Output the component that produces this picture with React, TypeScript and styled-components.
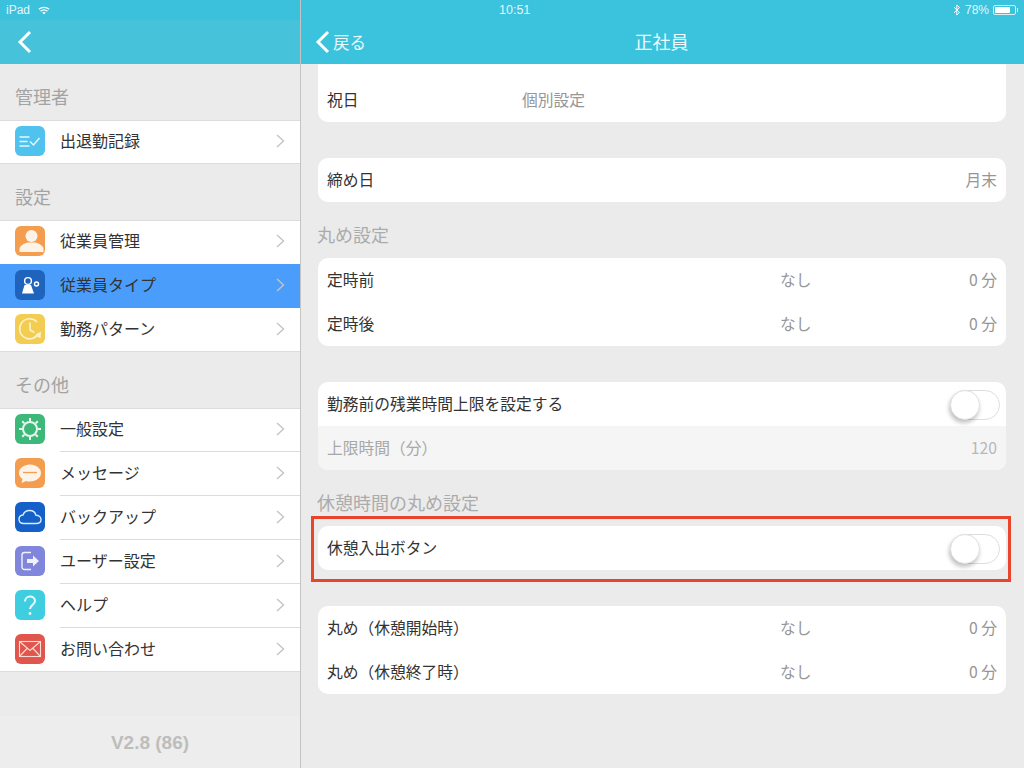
import React from 'react'
import styled, { createGlobalStyle } from 'styled-components'

const GlobalStyle = createGlobalStyle`
  html, body {
    margin: 0;
    padding: 0;
    background: #ebebeb;
  }
  body {
    font-family: "Noto Sans CJK JP", "Noto Sans", sans-serif;
  }
  * {
    box-sizing: border-box;
  }
`

const Tile = ({ color, children }: { color: string; children: React.ReactNode }) => (
  <IconTile $color={color}>
    <svg width="30" height="30" viewBox="0 0 30 30" fill="none">
      {children}
    </svg>
  </IconTile>
)

const menu = [
  {
    title: '管理者',
    items: [
      {
        label: '出退勤記録',
        icon: (
          <Tile color="#4fc3ee">
            <path d="M4.500 11h10M4.500 15.500h8M4.500 20h10" stroke="#e6f7fd" strokeWidth="1.500" />
            <path d="M15 15.500l3.500 3.500 6-7" stroke="#e6f7fd" strokeWidth="1.500" />
          </Tile>
        ),
      },
    ],
  },
  {
    title: '設定',
    items: [
      {
        label: '従業員管理',
        icon: (
          <Tile color="#f59d4f">
            <circle cx="16.500" cy="10" r="6" fill="#fdf3e8" />
            <path d="M4.500 26v-2.500c0-4 4.500-6 8-7h8c3.500 1 8 3 8 7V26z" fill="#fdf3e8" />
          </Tile>
        ),
      },
      {
        label: '従業員タイプ',
        active: true,
        icon: (
          <Tile color="#1f63bd">
            <circle cx="13" cy="11" r="3.400" stroke="#fff" strokeWidth="1.400" />
            <path d="M7 23.500l2.500-8.500h6.500l3 8.500z" fill="#fff" />
            <circle cx="21.500" cy="14" r="2" stroke="#fff" strokeWidth="1.500" />
          </Tile>
        ),
      },
      {
        label: '勤務パターン',
        icon: (
          <Tile color="#f2cd52">
            <path d="M23.500 19.500A10 10 0 1 1 22 8" stroke="#fbf2c8" strokeWidth="1.600" />
            <path d="M15 8.500V16l4.500 2.500" stroke="#fbf2c8" strokeWidth="1.600" />
            <path d="M26 17.500l-.5 7-5.500-3.500z" fill="#fbf2c8" />
          </Tile>
        ),
      },
    ],
  },
  {
    title: 'その他',
    items: [
      {
        label: '一般設定',
        icon: (
          <Tile color="#3cb878">
            <circle cx="15" cy="15" r="7" stroke="#e8f8ef" strokeWidth="2" />
            <path
              d="M15 4v3M15 23v3M4 15h3M23 15h3M7.200 7.200l2.100 2.100M20.700 20.700l2.100 2.100M7.200 22.800l2.100-2.100M20.700 9.300l2.100-2.100"
              stroke="#e8f8ef"
              strokeWidth="2"
            />
          </Tile>
        ),
      },
      {
        label: 'メッセージ',
        icon: (
          <Tile color="#f59d4f">
            <path d="M15 6.500c6 0 11 3.600 11 8.500s-5 8.500-11 8.500c-1.400 0-2.800-.2-4-.6L6.500 25l1-4C5.300 19.500 4 17.400 4 15c0-4.900 5-8.500 11-8.500z" fill="#fdf3e8" />
            <path d="M8 14.500h14" stroke="#f59d4f" strokeWidth="1.300" />
          </Tile>
        ),
      },
      {
        label: 'バックアップ',
        icon: (
          <Tile color="#1560c8">
            <path
              d="M9 21.500c-3 0-5-1.800-5-4.300 0-2.300 1.800-4 4-4.200C9 10.200 11.500 8.500 14.500 8.500c3.300 0 5.800 2 6.500 4.800 2.800 0 5 1.800 5 4.200 0 2.400-2 4-4.800 4z"
              stroke="#dcebfb"
              strokeWidth="1.400"
            />
          </Tile>
        ),
      },
      {
        label: 'ユーザー設定',
        icon: (
          <Tile color="#7f86dc">
            <path d="M16 6.500H9.500A2.500 2.500 0 0 0 7 9v12a2.500 2.500 0 0 0 2.500 2.500H16" stroke="#f0f1fc" strokeWidth="1.400" />
            <path d="M12 13h6V9.500l6 5.500-6 5.500V17h-6z" fill="#f0f1fc" />
          </Tile>
        ),
      },
      {
        label: 'ヘルプ',
        icon: (
          <Tile color="#3fcde0">
            <path d="M10 11.500c0-3 2.200-5 5-5s5 1.800 5 4.500c0 4-5 3.800-5 8" stroke="#eafafc" strokeWidth="2" />
            <circle cx="15" cy="23.500" r="1.400" fill="#eafafc" />
          </Tile>
        ),
      },
      {
        label: 'お問い合わせ',
        icon: (
          <Tile color="#e0564c">
            <rect x="4.500" y="7.500" width="21" height="15" stroke="#fbdcd6" strokeWidth="1.100" />
            <path d="M4.500 7.500L15 16.500l10.500-9M4.500 22.500l7.500-8M25.500 22.500l-7.500-8" stroke="#fbdcd6" strokeWidth="1.100" />
          </Tile>
        ),
      },
    ],
  },
]

const Chevron = () => (
  <svg width="9" height="14" viewBox="0 0 9 14" fill="none">
    <path d="M1 1l6.500 6L1 13" stroke="#c4c4c4" strokeWidth="1.400" />
  </svg>
)

const BackArrow = () => (
  <svg width="15" height="24" viewBox="0 0 15 24" fill="none">
    <path d="M13 2L3 12l10 10" stroke="#fff" strokeWidth="3" />
  </svg>
)

const Switch = () => (
  <SwitchTrack>
    <SwitchKnob />
  </SwitchTrack>
)

export default function App() {
  return (
    <Page>
      <GlobalStyle />
      <Sidebar>
        <StatusBarLeft>
          <StatusText>iPad</StatusText>
          <svg width="12" height="9" viewBox="0 0 14 10" fill="none">
            <path d="M1 3.500C4.500.5 9.500.5 13 3.500M3 5.800c2.500-2 5.500-2 8 0" stroke="#fff" strokeWidth="1.500" />
            <path d="M5 7.500c1.300-1 2.700-1 4 0L7 9.500z" fill="#fff" />
          </svg>
        </StatusBarLeft>
        <SideNav>
          <BackArrow />
        </SideNav>
        {menu.map((section) => (
          <section key={section.title}>
            <SideHeading>{section.title}</SideHeading>
            <MenuList>
              {section.items.map((item) => (
                <MenuRow key={item.label} $active={'active' in item && item.active}>
                  {item.icon}
                  <MenuLabel>{item.label}</MenuLabel>
                  <Chevron />
                </MenuRow>
              ))}
            </MenuList>
          </section>
        ))}
        <SideSpacer />
        <Version>V2.8 (86)</Version>
      </Sidebar>

      <Main>
        <MainBar>
          <span />
          <Clock>10:51</Clock>
          <StatusRight>
            <svg width="8" height="12" viewBox="0 0 8 12" fill="none">
              <path d="M1 3.200l5.500 5.300L3.800 11V1l2.700 2.500L1 8.800" stroke="#fff" strokeWidth="1" />
            </svg>
            <StatusText>78%</StatusText>
            <Battery>
              <BatteryLevel />
            </Battery>
          </StatusRight>
        </MainBar>
        <TitleBar>
          <BackLink>
            <BackArrow />
            <span>戻る</span>
          </BackLink>
          <PageTitle>正社員</PageTitle>
        </TitleBar>
        <Content>
          <Card $clipped>
            <Row $mid={195}>
              <Label>祝日</Label>
              <Value>個別設定</Value>
            </Row>
          </Card>

          <Card $gap={36}>
            <Row>
              <Label>締め日</Label>
              <span />
              <Value>月末</Value>
            </Row>
          </Card>

          <GroupTitle>丸め設定</GroupTitle>
          <Card>
            <Row>
              <Label>定時前</Label>
              <Value>なし</Value>
              <Value>0 分</Value>
            </Row>
            <Row>
              <Label>定時後</Label>
              <Value>なし</Value>
              <Value>0 分</Value>
            </Row>
          </Card>

          <Card $gap={36}>
            <Row>
              <Label>勤務前の残業時間上限を設定する</Label>
              <span />
              <Switch />
            </Row>
            <Row $disabled>
              <Label $muted>上限時間（分）</Label>
              <span />
              <Value $muted>120</Value>
            </Row>
          </Card>

          <GroupTitle>休憩時間の丸め設定</GroupTitle>
          <Card $highlight>
            <Row>
              <Label>休憩入出ボタン</Label>
              <span />
              <Switch />
            </Row>
          </Card>

          <Card $gap={36}>
            <Row>
              <Label>丸め（休憩開始時）</Label>
              <Value>なし</Value>
              <Value>0 分</Value>
            </Row>
            <Row>
              <Label>丸め（休憩終了時）</Label>
              <Value>なし</Value>
              <Value>0 分</Value>
            </Row>
          </Card>
        </Content>
      </Main>
    </Page>
  )
}

const Page = styled.div`
  display: flex;
  width: 1024px;
  height: 768px;
  overflow: hidden;
  background: #ebebeb;
`
const Sidebar = styled.aside`
  display: flex;
  flex-direction: column;
  width: 301px;
  flex-shrink: 0;
  border-right: 1px solid #c4c4c4;
  background: #ebebeb;
`
const StatusBarLeft = styled.div`
  display: flex;
  align-items: center;
  gap: 8px;
  height: 20px;
  padding-left: 6px;
  background: #3bc1db;
`
const StatusText = styled.span`
  font-size: 12px;
  color: #e4f6fa;
  font-family: "Liberation Sans", sans-serif;
`
const SideNav = styled.div`
  display: flex;
  align-items: center;
  height: 44px;
  padding-left: 17px;
  background: #46c3db;
`
const SideHeading = styled.h3`
  display: flex;
  align-items: center;
  height: 56px;
  margin: 0;
  padding: 8px 0 0 15px;
  font-size: 18px;
  font-weight: 400;
  color: #a3a3a3;
`
const MenuList = styled.div`
  background: #fff;
  box-shadow: inset 0 1px #dcdcdc, inset 0 -1px #dcdcdc;
`
const MenuRow = styled.div<{ $active?: boolean }>`
  position: relative;
  display: flex;
  align-items: center;
  height: 44px;
  padding: 0 15px 2px;
  background: ${(p) => (p.$active ? '#4a9dfb' : 'transparent')};
  & + &::before {
    content: '';
    position: absolute;
    top: -1px;
    left: 60px;
    right: 0;
    height: 1px;
    background: #dcdcdc;
  }
`
const IconTile = styled.div<{ $color: string }>`
  width: 30px;
  height: 30px;
  flex-shrink: 0;
  border-radius: 6px;
  background: ${(p) => p.$color};
  svg {
    display: block;
  }
`
const MenuLabel = styled.span`
  flex: 1;
  margin: 0 0 2px 15px;
  font-size: 16px;
  color: #333;
`
const SideSpacer = styled.div`
  flex: 1;
`
const Version = styled.div`
  display: flex;
  align-items: center;
  justify-content: center;
  height: 52px;
  padding-top: 2px;
  font-family: "Liberation Sans", sans-serif;
  font-size: 19px;
  font-weight: 700;
  color: #bdbdbd;
  background: #ededed;
`
const Main = styled.main`
  flex: 1;
  min-width: 0;
  display: flex;
  flex-direction: column;
`
const MainBar = styled.div`
  display: grid;
  grid-template-columns: 198px auto 1fr;
  align-items: center;
  height: 20px;
  background: #3bc2dc;
  padding-right: 8px;
`
const Clock = styled.span`
  font-family: "Liberation Sans", sans-serif;
  font-size: 12.500px;
  color: #e4f6fa;
`
const StatusRight = styled.div`
  display: flex;
  align-items: center;
  justify-content: flex-end;
  gap: 4px;
`
const Battery = styled.div`
  position: relative;
  width: 23px;
  height: 10px;
  padding: 1px;
  border: 1px solid #d5f1f6;
  border-radius: 2px;
  &::after {
    content: '';
    position: absolute;
    right: -3px;
    top: 2px;
    width: 1px;
    height: 4px;
    background: #d5f1f6;
  }
`
const BatteryLevel = styled.div`
  width: 78%;
  height: 100%;
  background: #fff;
  border-radius: 1px;
`
const TitleBar = styled.div`
  position: relative;
  display: flex;
  align-items: center;
  justify-content: center;
  height: 44px;
  background: #3bc2dc;
`
const BackLink = styled.div`
  position: absolute;
  left: 14px;
  top: 10px;
  display: flex;
  align-items: center;
  gap: 3px;
  font-size: 16.500px;
  color: #e8f8fb;
`
const PageTitle = styled.h1`
  margin: 0 2px 3px 0;
  font-size: 18px;
  font-weight: 400;
  color: #eefafc;
`
const Content = styled.div`
  display: flex;
  flex-direction: column;
  padding: 0 18px 0 17px;
`
const GroupTitle = styled.h2`
  display: flex;
  align-items: center;
  height: 56px;
  margin: 0 0 0 -1px;
  padding: 8px 0 0;
  font-size: 18px;
  font-weight: 400;
  color: #ababab;
`
const Card = styled.div<{ $gap?: number; $clipped?: boolean; $highlight?: boolean }>`
  position: relative;
  margin-top: ${(p) => p.$gap ?? 0}px;
  padding-top: ${(p) => (p.$clipped ? 14 : 0)}px;
  background: #fff;
  border-radius: ${(p) => (p.$clipped ? '0 0 10px 10px' : '10px')};
  ${(p) =>
    p.$highlight &&
    `
    &::after {
      content: '';
      position: absolute;
      top: -10px;
      left: -7px;
      right: -5px;
      bottom: -12px;
      border: 3px solid #e8452c;
      pointer-events: none;
    }
  `}
`
const Row = styled.div<{ $mid?: number; $disabled?: boolean }>`
  display: grid;
  grid-template-columns: ${(p) => p.$mid ?? 453}px 1fr auto;
  align-items: center;
  height: 44px;
  padding: 0 9px;
  ${(p) => p.$disabled && 'background: #f5f5f5; border-radius: 0 0 10px 10px;'}
`
const Label = styled.span<{ $muted?: boolean }>`
  margin-bottom: 2px;
  font-size: 15.750px;
  color: ${(p) => (p.$muted ? '#a8a8a8' : '#333')};
  white-space: nowrap;
`
const Value = styled.span<{ $muted?: boolean }>`
  margin-bottom: 2px;
  font-size: 15.750px;
  color: ${(p) => (p.$muted ? '#b8b8b8' : '#969696')};
  white-space: nowrap;
`
const SwitchTrack = styled.div`
  position: relative;
  width: 50px;
  height: 30px;
  margin: 1px -3px 0 0;
  border: 1px solid #dedede;
  border-radius: 15px;
  background: #fff;
`
const SwitchKnob = styled.div`
  position: absolute;
  left: -1px;
  top: -1px;
  width: 30px;
  height: 30px;
  border-radius: 50%;
  background: #fff;
  border: 1px solid #e0e0e0;
  box-shadow: -1px 3px 4px rgba(0, 0, 0, 0.25);
`
